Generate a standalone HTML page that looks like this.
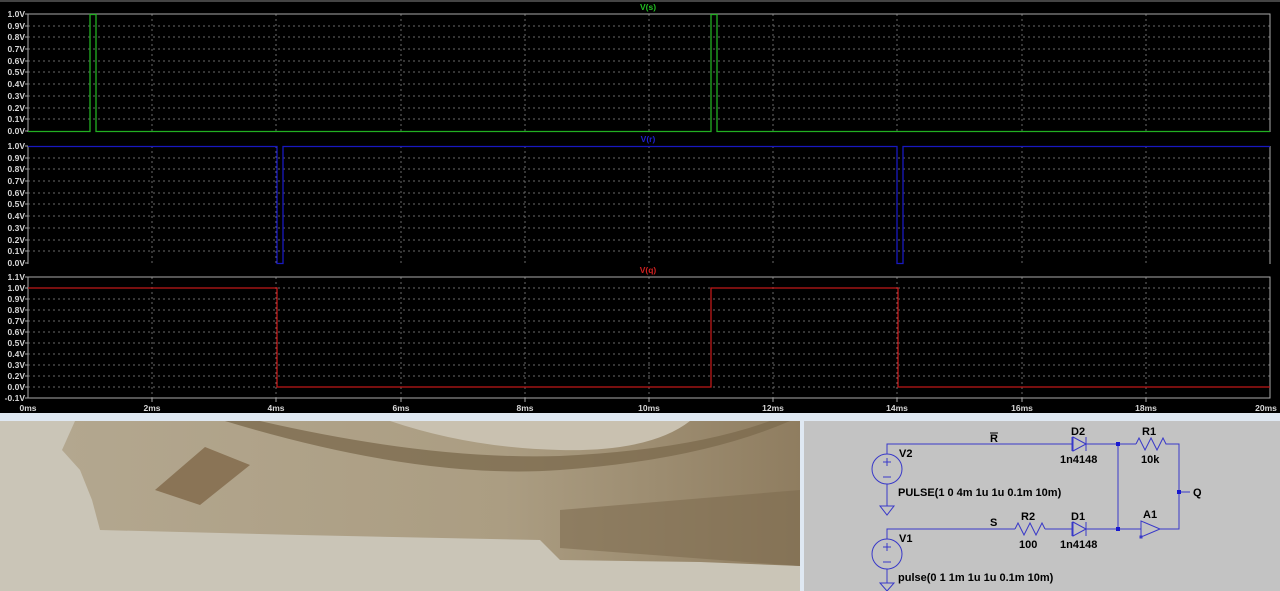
<!DOCTYPE html>
<html><head><meta charset="utf-8"><style>
html,body{margin:0;padding:0;width:1280px;height:591px;overflow:hidden;background:#000}
svg{display:block}
.l{font:bold 8.5px "Liberation Sans",sans-serif;fill:#d8d8d8}
.s{font:bold 11px "Liberation Sans",sans-serif;fill:#000}
</style></head><body>
<svg width="1280" height="591" viewBox="0 0 1280 591" xmlns="http://www.w3.org/2000/svg">
<rect x="0" y="0" width="1280" height="414" fill="#000"/>
<line x1="0" y1="1" x2="1280" y2="1" stroke="#888"/>
<g stroke="#6a6a6a" stroke-width="1" stroke-dasharray="2,3" fill="none">
<path d="M28 119H1270M28 108H1270M28 96H1270M28 84H1270M28 72H1270M28 61H1270M28 49H1270M28 37H1270M28 26H1270"/>
<path d="M28 251H1270M28 240H1270M28 228H1270M28 216H1270M28 204H1270M28 193H1270M28 181H1270M28 169H1270M28 158H1270"/>
<path d="M28 387H1270M28 376H1270M28 365H1270M28 354H1270M28 343H1270M28 332H1270M28 321H1270M28 310H1270M28 299H1270M28 288H1270"/>
<path d="M152 14V132M276 14V132M401 14V132M525 14V132M649 14V132M773 14V132M897 14V132M1022 14V132M1146 14V132"/>
<path d="M152 146V264M276 146V264M401 146V264M525 146V264M649 146V264M773 146V264M897 146V264M1022 146V264M1146 146V264"/>
<path d="M152 277V398M276 277V398M401 277V398M525 277V398M649 277V398M773 277V398M897 277V398M1022 277V398M1146 277V398"/>
</g>
<g stroke="#aaa" fill="none">
<path d="M28 14H1270V132M28 14V132"/>
<path d="M28 146V264M1270 146V264"/>
<path d="M28 277H1270V398H28Z"/>
<path d="M25 14H28M25 26H28M25 37H28M25 49H28M25 61H28M25 72H28M25 84H28M25 96H28M25 108H28M25 119H28M25 131H28"/>
<path d="M25 146H28M25 158H28M25 169H28M25 181H28M25 193H28M25 204H28M25 216H28M25 228H28M25 240H28M25 251H28M25 263H28"/>
<path d="M25 277H28M25 288H28M25 299H28M25 310H28M25 321H28M25 332H28M25 343H28M25 354H28M25 365H28M25 376H28M25 387H28M25 398H28"/>
<path d="M152 398V402M276 398V402M401 398V402M525 398V402M649 398V402M773 398V402M897 398V402M1022 398V402M1146 398V402"/>
</g>
<g class="l" text-anchor="end">
<text x="25" y="17">1.0V</text><text x="25" y="29">0.9V</text><text x="25" y="40">0.8V</text><text x="25" y="52">0.7V</text><text x="25" y="64">0.6V</text><text x="25" y="75">0.5V</text><text x="25" y="87">0.4V</text><text x="25" y="99">0.3V</text><text x="25" y="111">0.2V</text><text x="25" y="122">0.1V</text><text x="25" y="134">0.0V</text>
<text x="25" y="149">1.0V</text><text x="25" y="161">0.9V</text><text x="25" y="172">0.8V</text><text x="25" y="184">0.7V</text><text x="25" y="196">0.6V</text><text x="25" y="207">0.5V</text><text x="25" y="219">0.4V</text><text x="25" y="231">0.3V</text><text x="25" y="243">0.2V</text><text x="25" y="254">0.1V</text><text x="25" y="266">0.0V</text>
<text x="25" y="280">1.1V</text><text x="25" y="291">1.0V</text><text x="25" y="302">0.9V</text><text x="25" y="313">0.8V</text><text x="25" y="324">0.7V</text><text x="25" y="335">0.6V</text><text x="25" y="346">0.5V</text><text x="25" y="357">0.4V</text><text x="25" y="368">0.3V</text><text x="25" y="379">0.2V</text><text x="25" y="390">0.1V</text><text x="25" y="401" dy="-11" visibility="hidden">x</text><text x="25" y="390" dy="0" visibility="hidden">x</text>
</g>
<g class="l" text-anchor="end"><text x="25" y="390" visibility="hidden">x</text></g>
<g class="l" text-anchor="end">
<text x="25" y="390" visibility="hidden">.</text>
</g>
<g class="l" text-anchor="end">
<text x="25" y="390" fill="none"></text>
</g>
<g class="l" text-anchor="end">
<text x="25" y="390" visibility="hidden"></text>
<text x="25" y="390" style="display:none"></text>
</g>
<g class="l" text-anchor="end">
<text x="25" y="390" visibility="hidden"></text>
</g>
<g class="l" text-anchor="end">
<text x="25" y="390" visibility="hidden"></text>
</g>
<g class="l" text-anchor="end">
<text x="25" y="390" visibility="hidden"></text>
</g>
<rect x="0" y="384" width="24" height="18" fill="#000"/>
<g class="l" text-anchor="end">
<text x="25" y="390">0.0V</text><text x="25" y="401">-0.1V</text>
</g>
<rect x="0" y="378" width="0" height="0"/>
<g class="l" text-anchor="middle">
<text x="28" y="411">0ms</text><text x="152" y="411">2ms</text><text x="276" y="411">4ms</text><text x="401" y="411">6ms</text><text x="525" y="411">8ms</text><text x="649" y="411">10ms</text><text x="773" y="411">12ms</text><text x="897" y="411">14ms</text><text x="1022" y="411">16ms</text><text x="1146" y="411">18ms</text><text x="1266" y="411">20ms</text>
</g>
<text x="648" y="10" text-anchor="middle" style="font:bold 8.5px 'Liberation Sans',sans-serif" fill="#22c022">V(s)</text>
<text x="648" y="142" text-anchor="middle" style="font:bold 8.5px 'Liberation Sans',sans-serif" fill="#2020d0">V(r)</text>
<text x="648" y="273" text-anchor="middle" style="font:bold 8.5px 'Liberation Sans',sans-serif" fill="#d02020">V(q)</text>
<path d="M28 131.5H90V14.5H96V131.5H711V14.5H717V131.5H1270" stroke="#22b022" stroke-width="1.3" fill="none"/>
<path d="M28 146.5H277V263.5H283V146.5H897V263.5H903V146.5H1270" stroke="#1818c0" stroke-width="1.3" fill="none"/>
<path d="M28 288H277V387H711V288H898V387H1270" stroke="#c01818" stroke-width="1.3" fill="none"/>
<rect x="0" y="413" width="1280" height="8" fill="#dfe8f2"/>
<rect x="0" y="421" width="800" height="170" fill="#cac5b7"/>
<defs><linearGradient id="g" x1="0" y1="0" x2="1" y2="0"><stop offset="0" stop-color="#b3a78f"/><stop offset="0.6" stop-color="#ab9d82"/><stop offset="1" stop-color="#8f7d60"/></linearGradient></defs>
<path d="M75 421H800V566L700 562L560 560L540 540L300 535L100 530L92 500L80 470L62 450Z" fill="url(#g)"/>
<path d="M390 421H690Q650 452 560 450Q470 448 390 421Z" fill="#c9c1b0"/>
<path d="M225 421Q420 480 560 470Q700 460 790 421L770 421Q690 450 560 456Q430 460 260 421Z" fill="#7d6b4f" opacity="0.8"/>
<path d="M155 490L205 447L250 465L200 505Z" fill="#8a7456"/>
<path d="M560 510L800 490V566L560 548Z" fill="#7f6c50" opacity="0.6"/>
<rect x="800" y="421" width="4" height="170" fill="#dfe8f2"/>
<rect x="804" y="421" width="476" height="170" fill="#c3c3c3"/>
<g stroke="#3838c8" stroke-width="1" fill="none">
<path d="M887 454V444H1072M1086 444H1136M1168 444H1179V529H1160"/>
<circle cx="887" cy="469" r="15"/><path d="M887 484V506M880 506H894L887 515Z"/>
<path d="M887 539V529H1015M1045 529H1072M1086 529H1141"/>
<circle cx="887" cy="554" r="15"/><path d="M887 569V583M880 583H894L887 591Z"/>
<path d="M1072 437V451M1086 437V451M1086 444L1073 437V451Z"/>
<path d="M1072 522V536M1086 522V536M1073 522L1086 529L1073 536Z"/>
<path d="M1136 444L1139 438L1145 450L1151 438L1157 450L1163 438L1166 444H1168"/>
<path d="M1015 529L1018 523L1024 535L1030 523L1036 535L1042 523L1045 529"/>
<path d="M1118 444V529M1179 492H1190"/>
<path d="M1141 521V537L1160 529Z"/><rect x="1140" y="536" width="2" height="2"/>
<path d="M883 462H891M887 458V466M883 477H891"/>
<path d="M883 547H891M887 543V551M883 562H891"/>
</g>
<g fill="#1818d0"><rect x="1116" y="442" width="4" height="4"/><rect x="1116" y="527" width="4" height="4"/><rect x="1177" y="490" width="4" height="4"/></g>
<g class="s">
<text x="899" y="457">V2</text><text x="899" y="542">V1</text>
<text x="898" y="496">PULSE(1 0 4m 1u 1u 0.1m 10m)</text>
<text x="898" y="581">pulse(0 1 1m 1u 1u 0.1m 10m)</text>
<text x="990" y="442">R</text><path d="M990 433H998" stroke="#000"/>
<text x="990" y="526">S</text>
<text x="1071" y="435">D2</text><text x="1060" y="463">1n4148</text>
<text x="1071" y="520">D1</text><text x="1060" y="548">1n4148</text>
<text x="1142" y="435">R1</text><text x="1141" y="463">10k</text>
<text x="1021" y="520">R2</text><text x="1019" y="548">100</text>
<text x="1143" y="518">A1</text><text x="1193" y="496">Q</text>
</g>
</svg>
</body></html>
